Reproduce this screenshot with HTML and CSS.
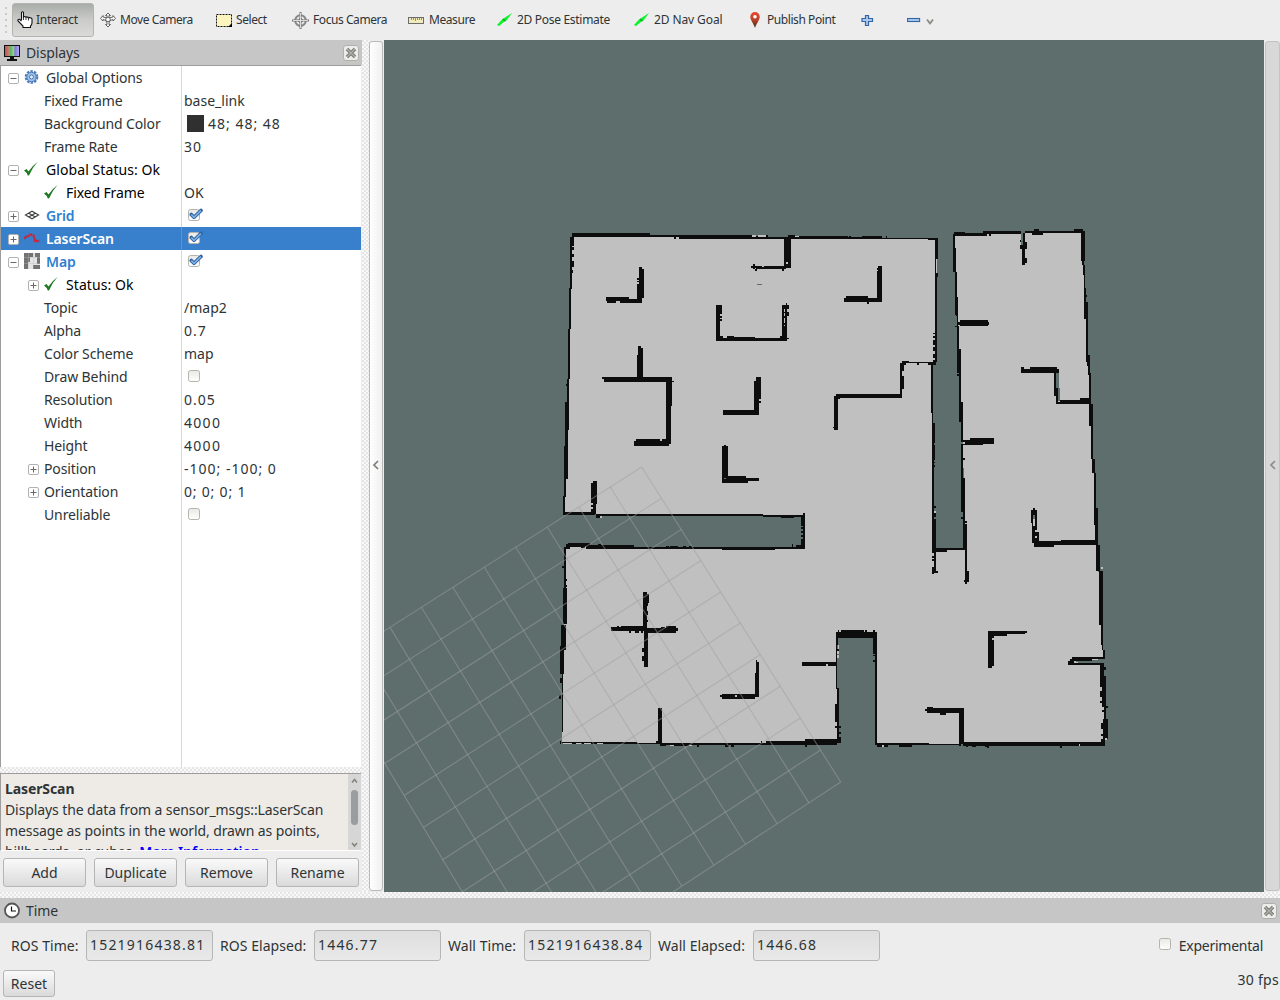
FILE: index.html
```html
<!DOCTYPE html>
<html lang="en">
<head>
<meta charset="utf-8">
<title>RViz</title>
<link rel="stylesheet" href="styles.css">
</head>
<body>
<svg class="defs" width="0" height="0">
  <defs>
    <linearGradient id="gbox" x1="0" y1="0" x2="0" y2="1"><stop offset="0" stop-color="#e8e8e6"/><stop offset="1" stop-color="#fff"/></linearGradient>
    <linearGradient id="gpin" x1="0" y1="0" x2="0" y2="1"><stop offset="0" stop-color="#f0452e"/><stop offset=".5" stop-color="#b8432b"/><stop offset="1" stop-color="#3e2a10"/></linearGradient>
    <symbol id="check" viewBox="0 0 14 14"><path d="M0 8.500L2.500 7L4.500 9.500Q8 4 13.500 0Q8 6 5 13.500H3.800Q2.500 10 0 8.500z" fill="#1d7a22"/></symbol>
    <symbol id="box" viewBox="0 0 16 14"><rect x="1.500" y="1.500" width="11" height="11" rx="2" fill="url(#gbox)" stroke="#b4b4ac"/></symbol>
    <symbol id="boxon" viewBox="0 0 16 14"><rect x="1.500" y="1.500" width="11" height="11" rx="2" fill="url(#gbox)" stroke="#b4b4ac"/><path d="M4.300 6.500L7 9.300L14 2.500" fill="none" stroke="#2f62a3" stroke-width="3.600" stroke-linejoin="round" stroke-linecap="round"/><path d="M4.300 6.700L7 9.300L13.900 2.600" fill="none" stroke="#80b0e2" stroke-width="1.700"/></symbol>
    <symbol id="plus" viewBox="0 0 11 11"><rect x=".5" y=".5" width="10" height="10" rx="1.500" fill="#fff" stroke="#b2b2b2"/><path d="M2.500 5.500h6M5.500 2.500v6" stroke="#686868"/></symbol>
    <symbol id="minus" viewBox="0 0 11 11"><rect x=".5" y=".5" width="10" height="10" rx="1.500" fill="#fff" stroke="#b2b2b2"/><path d="M2.500 5.500h6" stroke="#686868"/></symbol>
    <symbol id="arrow" viewBox="0 0 16 14"><path d="M0 12L5 6.500L6.500 5.500L15 0L9.500 7.500L7.500 8.500L2 13z" fill="#0cf329"/><path d="M5.500 6.500L6.500 5.500L9 8L7.800 8.500z" fill="#169a28"/></symbol>
    <symbol id="close" viewBox="0 0 16 16"><rect x=".5" y=".5" width="15" height="15" rx="2.500" fill="#ececea" stroke="#b0b0ae"/><path d="M4 4l8 8M12 4l-8 8" stroke="#777971" stroke-width="3.400"/><path d="M4 4l8 8M12 4l-8 8" stroke="#b0b1ac" stroke-width="1.300"/></symbol>
  </defs>
</svg>

<div class="toolbar">
  <div class="grip"></div>
  <div class="tool active"><svg width="17" height="17" viewBox="0 0 17 17"><path d="M4.500 9V1.500q1-1.500 2 0V6q1-1 2.300.2q1-.8 2.200.3q1.200-.7 2 .5q1.500-.5 2 1V12q-.2 2-1.500 3v1.500H6V15L1 10Q.5 8 2.500 8.300L4.500 10" fill="#fff" stroke="#111" stroke-width="1.100"/><path d="M6.500 6v3M9 6.500V9M11.500 7v2.500" stroke="#111" stroke-width=".8"/></svg><span>Interact</span></div>
  <div class="tool"><svg width="16" height="16" viewBox="0 0 16 16" fill="#f8f8f8" stroke="#555" stroke-width=".9"><path d="M8 1l2.500 2.500H9V6L13 5V3.500L15.500 6.500L13 9V7.500L10 8.500L9 11v1.500h1.500L8 15l-2.500-2.500H7V11L6 8.500L3 7.500V9L.5 6.500L3 3.500V5l4 1V3.500H5.500z"/><circle cx="8" cy="7.500" r="2.300"/></svg><span>Move Camera</span></div>
  <div class="tool"><svg width="16" height="15" viewBox="0 0 16 15"><rect x=".5" y="1.500" width="15" height="12" fill="#fcf5bd" stroke="#111" stroke-dasharray="2 1"/><path d="M16 10v4h-4z"/></svg><span>Select</span></div>
  <div class="tool"><svg width="17" height="17" viewBox="0 0 17 17" fill="none"><circle cx="8.500" cy="8.500" r="5.300" stroke="#888" stroke-width="2"/><circle cx="8.500" cy="8.500" r="2" stroke="#666"/><path d="M8.500 0v17M0 8.500h17" stroke="#777" stroke-width="2"/><path d="M8.500 1v15M1 8.500h15" stroke="#f4f4f4" stroke-width=".8"/></svg><span>Focus Camera</span></div>
  <div class="tool measure"><svg width="16" height="7" viewBox="0 0 16 7"><rect x=".5" y=".5" width="15" height="6" fill="#f0ebba" stroke="#6d6d6d"/><path d="M3.500 1v2M5.500 1v2M7.500 1v3M9.500 1v2M11.500 1v2M13.500 1v2" stroke="#777" stroke-width=".8"/></svg><span>Measure</span></div>
  <div class="tool pose"><svg width="16" height="14"><use href="#arrow"/></svg><span>2D Pose Estimate</span></div>
  <div class="tool nav"><svg width="16" height="14"><use href="#arrow"/></svg><span>2D Nav Goal</span></div>
  <div class="tool point"><svg width="10" height="16" viewBox="0 0 10 16"><path d="M5 0a4.700 4.700 0 0 1 4.700 5C9.700 8 6.500 11.500 5 16C3.500 11.500.3 8 .3 5A4.700 4.700 0 0 1 5 0z" fill="url(#gpin)"/><circle cx="5" cy="4.700" r="1.800" fill="#fff"/></svg><span>Publish Point</span></div>
  <div class="tool"><svg width="13" height="13" viewBox="0 0 13 13"><path d="M4.500 1.500h3v3h4v3h-4v4h-3v-4h-3.500v-3h3.500z" fill="#a9c9ee" stroke="#3465a4" stroke-width="1.200"/></svg></div>
  <div class="tool"><svg width="28" height="12" viewBox="0 0 28 12"><rect x=".6" y="4.500" width="12" height="3" fill="#a9c9ee" stroke="#3465a4" stroke-width="1.100"/><path d="M20 5.500l3 4l3-4" fill="none" stroke="#8b8b85" stroke-width="1.800"/></svg></div>
</div>

<div class="middle">
  <div class="dock">
    <div class="title"><svg class="monitor" width="17" height="17" viewBox="0 0 17 17"><defs><linearGradient id="scr"><stop offset="0" stop-color="#c0504c"/><stop offset=".35" stop-color="#c08a84"/><stop offset=".36" stop-color="#5bb054"/><stop offset=".66" stop-color="#9cd796"/><stop offset=".67" stop-color="#7a75d8"/><stop offset="1" stop-color="#b4b0f2"/></linearGradient></defs><rect x=".5" y=".5" width="15" height="11" fill="url(#scr)" stroke="#111"/><path d="M6 12h4v2h3v2H3v-2h3z" fill="#111"/></svg><span>Displays</span><svg class="close" width="16" height="16"><use href="#close"/></svg></div>
    <div class="tree">
      <div class="row"><div class="name l0"><svg class="tog"><use href="#minus"/></svg><svg class="ico up" viewBox="0 0 16 16"><circle cx="7.500" cy="8" r="5.800" fill="none" stroke="#4a7ab8" stroke-width="2" stroke-dasharray="2.500 1.140"/><circle cx="7.500" cy="8" r="4.700" fill="#9dbfe6" stroke="#4a7ab8"/><circle cx="7.500" cy="8" r="2" fill="#e8f0fa" stroke="#4a7ab8"/></svg>Global Options</div><div class="val"></div></div>
      <div class="row"><div class="name leaf">Fixed Frame</div><div class="val">base_link</div></div>
      <div class="row"><div class="name leaf">Background Color</div><div class="val num"><i class="swatch"></i>48; 48; 48</div></div>
      <div class="row"><div class="name leaf">Frame Rate</div><div class="val num">30</div></div>
      <div class="row black wide"><div class="name l0"><svg class="tog"><use href="#minus"/></svg><svg class="chk"><use href="#check"/></svg>Global Status: Ok</div><div class="val"></div></div>
      <div class="row black"><div class="name leaf"><svg class="chk"><use href="#check"/></svg>Fixed Frame</div><div class="val ok">OK</div></div>
      <div class="row disp"><div class="name l0"><svg class="tog"><use href="#plus"/></svg><svg class="ico up" viewBox="0 0 16 16" fill="none" stroke="#444" stroke-width="1.200"><path d="M1.500 8L8 4.300l6.500 3.700L8 11.700zM4.700 6.200l6.600 3.700M11.300 6.200l-6.600 3.700"/></svg>Grid</div><div class="val"><svg class="cb"><use href="#boxon"/></svg></div></div>
      <div class="row disp sel"><div class="name l0"><svg class="tog"><use href="#plus"/></svg><svg class="ico" viewBox="0 0 16 16"><path d="M.5 9L2 6.500L4.500 6L6 4.500L9.500 5.500l1.500 5.500h4.500" fill="none" stroke="#cf2438" stroke-width="2.300" stroke-dasharray="3 .5"/></svg>LaserScan</div><div class="val"><svg class="cb"><use href="#boxon"/></svg></div></div>
      <div class="row disp"><div class="name l0"><svg class="tog"><use href="#minus"/></svg><svg class="ico mapico" viewBox="0 0 16 16"><path d="M0 0h16v16H0z" fill="#e5e5e5"/><path d="M0 0h9v4H6v5H4v7H0zM11 0h5v4h-5zM13 4h3v7h-3zM9 12h7v4H9z" fill="#737373"/><path d="M4.500 0v16M9.500 0v16M0 4.500h16M0 10.500h16" stroke="#bbb" stroke-width=".4"/></svg>Map</div><div class="val"><svg class="cb"><use href="#boxon"/></svg></div></div>
      <div class="row black wide"><div class="name l1"><svg class="tog"><use href="#plus"/></svg><svg class="chk"><use href="#check"/></svg>Status: Ok</div><div class="val"></div></div>
      <div class="row"><div class="name leaf">Topic</div><div class="val">/map2</div></div>
      <div class="row"><div class="name leaf">Alpha</div><div class="val num">0.7</div></div>
      <div class="row"><div class="name leaf">Color Scheme</div><div class="val">map</div></div>
      <div class="row"><div class="name leaf">Draw Behind</div><div class="val"><svg class="cb"><use href="#box"/></svg></div></div>
      <div class="row"><div class="name leaf">Resolution</div><div class="val num">0.05</div></div>
      <div class="row"><div class="name leaf">Width</div><div class="val num big">4000</div></div>
      <div class="row"><div class="name leaf">Height</div><div class="val num big">4000</div></div>
      <div class="row"><div class="name l1"><svg class="tog"><use href="#plus"/></svg>Position</div><div class="val num">-100; -100; 0</div></div>
      <div class="row"><div class="name l1"><svg class="tog"><use href="#plus"/></svg>Orientation</div><div class="val num slim">0; 0; 0; 1</div></div>
      <div class="row"><div class="name leaf">Unreliable</div><div class="val"><svg class="cb"><use href="#box"/></svg></div></div>
      <div class="row fill"><div class="name"></div><div class="val"></div></div>
    </div>
    <div class="hsplit dots"></div>
    <div class="help">
      <div class="helptext"><b>LaserScan</b><br>Displays the data from a sensor_msgs::LaserScan<br>message as points in the world, drawn as points,<br>billboards, or cubes. <a>More Information.</a></div>
      <div class="sbar"><svg width="13" height="76" viewBox="0 0 13 76"><path d="M4 8.500l2.500-3l2.500 3M4 69l2.500 3l2.500-3" fill="none" stroke="#85857f" stroke-width="1.600"/><rect x="3" y="16" width="7" height="35" rx="3.500" fill="#9a9c9d"/></svg></div>
    </div>
    <div class="buttons"><div class="btn">Add</div><div class="btn">Duplicate</div><div class="btn">Remove</div><div class="btn">Rename</div></div>
  </div>
  <div class="vsplit dots"></div>
  <div class="handle left"><svg width="8" height="10" viewBox="0 0 8 10"><path d="M6 1L2 5l4 4" fill="none" stroke="#7d7d78" stroke-width="1.700"/></svg></div>
  <svg class="view" width="880" height="852" viewBox="384 40 880 852">
    <rect x="384" y="40" width="880" height="852" fill="#5e6e6c"/>
    <g shape-rendering="crispEdges">
      <path fill="#c0c0c0" d="M572 236L788 237L937 239L936 363L932 363L934 549L965 549L963 440L958 330L954 235L1083 232L1086 300L1090 400L1097 543L1103 657V659L1070 662L1103 664L1105 744H876V633H837V743H562L564 640L566 547H804V515L565 514L568 370z"/>
      <g fill="#0d0d0d">
        <path transform="translate(550 220) scale(.33333)" d="M66 39h234v9h-234zM66 45h540v6h-540zM372 51h6v6h-6zM387 51h423v6h-423zM606 49h48v3h-48zM648 45h6v6h-6zM714 45h21v6h-21zM748 48h62v6h-62zM60 51h6v155h-6zM66 51h6v27h-6zM66 82h6v8h-6zM66 102h6v10h-6zM66 122h6v18h-6zM64 150h4v8h-4zM57 204h6v123h-6zM54 327h6v150h-6zM48 492h6v6h-6zM51 477h6v70h-6zM45 546h12v84h-12zM45 630h9v50h-9zM42 678h12v99h-12zM42 777h6v55h-6zM39 828h6v54h-6zM39 876h96v9h-96z
        M267 141h9v10h-9zM267 147h15v87h-15zM261 174h6v6h-6zM261 183h6v4h-6zM261 193h6v44h-6zM261 234h15v14h-15zM168 231h69v12h-69zM171 237h27v11h-27zM198 237h78v6h-78zM210 240h60v8h-60z
        M702 51h21v75h-21zM702 126h6v18h-6zM714 126h9v18h-9zM708 132h6v12h-6zM642 138h66v9h-66zM603 138h18v6h-18zM609 132h6v15h-6zM615 147h6v5h-6zM618 142h24v5h-24zM618 138h17v4h-17zM696 144h6v9h-6z
        M498 255h12v108h-12zM510 255h6v27h-6zM510 289h6v4h-6zM510 297h6v5h-6zM498 354h213v9h-213zM498 348h21v9h-21zM531 348h21v9h-21zM552 351h63v4h-63zM690 348h15v9h-15zM696 255h6v100h-6zM706 255h5v100h-5zM702 255h6v12h-6zM702 276h6v3h-6zM702 288h6v5h-6zM702 309h6v6h-6zM702 318h3v30h-3zM711 255h6v12h-6zM711 276h6v12h-6zM708 249h3v6h-3zM711 354h6v3h-6z
        M264 378h9v27h-9zM267 384h12v90h-12zM261 405h9v69h-9zM156 471h210v6h-210zM162 477h204v9h-204zM348 477h18v81h-18zM348 558h15v114h-15zM366 483h6v3h-6zM252 663h105v15h-105zM258 657h72v9h-72zM336 657h26v15h-26z
        M618 471h15v66h-15zM612 483h15v99h-15zM627 543h6v6h-6zM519 570h108v14h-108zM516 678h18v96h-18zM522 675h6v3h-6zM528 768h60v21h-60zM516 768h6v21h-6zM516 778h78v11h-78zM588 774h39v9h-39z
        M129 783h12v69h-12zM123 789h18v60h-18zM129 849h9v33h-9zM123 855h5v5h-5zM123 866h9v10h-9zM138 882h501v6h-501zM639 885h126v5h-126zM693 888h39v6h-39zM138 885h12v8h-12z"/>
        <path transform="translate(800 220) scale(.33333)" d="M0 48h30v5H0zM33 48h112v5H33zM147 48h6v5h-6zM0 51h246v6H0zM186 48h60v6h-60zM258 48h3v6h-3zM246 54h168v3h-168zM384 56h24v4h-24zM405 54h8v63h-8zM405 117h3v52h-3zM407 159h7v12h-7zM405 169h6v258h-6zM399 339h6v3h-6zM399 348h6v6h-6zM399 360h6v15h-6zM399 381h6v12h-6zM399 402h6v12h-6zM399 420h9v9h-9z
        M234 138h12v107h-12zM231 144h6v6h-6zM231 153h15v92h-15zM132 234h114v11h-114zM138 228h66v9h-66zM201 245h6v6h-6z
        M306 423h21v6h-21zM300 429h12v24h-12zM300 429h6v105h-6zM306 468h6v39h-6zM312 426h93v3h-93zM312 429h6v6h-6zM351 429h6v6h-6zM384 426h24v8h-24zM108 522h198v11h-198zM102 528h12v101h-12zM99 621h3v4h-3zM114 533h6v4h-6zM393 429h6v150h-6zM396 579h3v30h-3zM397 609h8v59h-8zM397 675h8v45h-8zM396 668h6v202h-6zM402 726h4v4h-4zM402 736h4v4h-4zM402 858h6v6h-6zM396 869h6v131h-6zM402 880h6v11h-6zM400 897h8v103h-8zM402 990h6v66h-6zM396 1008h6v6h-6zM396 1017h6v5h-6zM396 1041h6v21h-6zM402 1053h12v6h-12zM408 984h90v6h-90zM408 990h33v6h-33z
        M459 42h6v114h-6zM462 36h33v12h-33zM465 84h3v72h-3zM465 156h5v130h-5zM467 207h4v80h-4zM470 230h4v90h-4zM465 318h6v3h-6zM471 318h6v140h-6zM477 387h6v160h-6zM471 462h6v6h-6zM477 546h12v60h-12zM483 606h6v60h-6zM483 672h6v204h-6zM489 714h6v6h-6zM489 774h6v216h-6zM483 891h6v6h-6zM495 903h6v5h-6zM495 912h6v150h-6zM495 1053h12v33h-12zM492 1080h9v6h-9zM495 1086h6v6h-6z
        M474 306h93v10h-93zM480 300h84v18h-84zM489 660h93v6h-93zM495 660h87v12h-87zM510 654h72v18h-72zM489 671h60v4h-60z
        M465 39h95v8h-95zM549 33h114v9h-114zM567 42h6v6h-6zM675 33h180v6h-180zM702 27h15v6h-15zM696 39h33v6h-33zM822 27h27v6h-27zM669 39h6v48h-6zM660 75h21v12h-21zM660 60h3v5h-3zM672 66h9v21h-9zM666 87h9v48h-9zM675 114h6v15h-6z
        M843 33h12v90h-12zM846 123h6v12h-6zM849 135h6v30h-6zM852 165h4v42h-4zM852 205h6v92h-6zM858 225h3v6h-3zM858 246h6v180h-6zM861 405h9v33h-9zM864 438h6v28h-6zM867 460h5v46h-5zM867 501h6v51h-6zM867 552h12v66h-12zM873 618h6v100h-6zM876 717h9v42h-9zM882 759h6v156h-6zM885 864h9v111h-9zM888 975h12v78h-12zM897 1053h12v57h-12z
        M663 447h114v12h-114zM690 441h81v10h-81zM663 441h9v9h-9zM762 456h6v72h-6zM768 480h6v72h-6zM780 540h92v12h-92zM768 546h15v6h-15zM840 534h33v9h-33zM693 870h6v40h-6zM699 864h6v21h-6zM705 870h6v60h-6zM696 909h3v60h-3zM699 918h6v50h-6zM705 936h12v12h-12zM711 945h6v20h-6zM705 955h8v10h-8zM702 963h189v11h-189zM783 960h110v6h-110zM702 974h60v6h-60z"/>
        <path transform="translate(550 500) scale(.33333)" d="M759 39h6v105h-6zM753 45h6v32h-6zM753 82h6v6h-6zM753 94h6v5h-6zM753 106h6v6h-6zM753 118h6v25h-6zM48 132h48v9h-48zM54 129h65v9h-65zM42 141h18v6h-18zM94 138h12v6h-12zM108 135h144v11h-144zM144 132h9v4h-9zM252 140h512v6h-512zM516 144h159v6h-159zM348 137h8v4h-8zM360 138h24v4h-24zM399 138h9v4h-9zM417 137h9v4h-9zM726 132h3v9h-3zM738 135h27v5h-27zM42 147h6v120h-6zM36 198h6v6h-6zM48 237h3v5h-3zM48 255h3v5h-3zM39 264h12v108h-12zM33 375h15v75h-15zM30 438h12v84h-12zM30 534h9v16h-9zM36 522h4v28h-4zM36 550h3v145h-3zM27 585h6v12h-6zM30 722h4v9h-4z
        M36 726h225v4h-225zM66 730h12v3h-12zM95 730h7v3h-7zM123 730h18v3h-18zM160 729h170v3h-170zM324 624h12v105h-12zM318 723h15v8h-15zM330 729h18v8h-18zM348 729h416v5h-416zM363 732h54v6h-54zM441 735h6v5h-6zM525 735h12v5h-12zM543 735h8v5h-8zM633 723h3v6h-3zM648 723h120v10h-120zM765 717h96v18h-96zM861 711h12v18h-12zM765 735h6v5h-6z
        M279 276h12v115h-12zM291 282h6v27h-6zM288 309h6v10h-6zM288 333h6v12h-6zM288 360h6v6h-6zM282 390h12v110h-12zM276 444h6v12h-6zM276 468h6v15h-6zM183 381h30v11h-30zM201 378h6v4h-6zM213 378h78v14h-78zM291 384h87v14h-87zM348 378h30v9h-30zM378 384h6v9h-6zM333 381h11v4h-11zM237 392h6v6h-6zM255 392h12v6h-12zM273 392h6v6h-6z
        M618 480h3v6h-3zM618 486h9v105h-9zM615 519h12v72h-12zM510 585h45v6h-45zM516 582h39v15h-39zM561 582h66v9h-66zM555 591h60v6h-60zM555 582h6v3h-6zM561 588h54v9h-54zM756 486h105v6h-105zM756 490h72v7h-72zM834 490h25v7h-25zM858 396h6v40h-6zM858 436h3v50h-3zM858 486h4v80h-4zM861 448h6v4h-6zM861 564h6v100h-6zM855 612h9v54h-9zM862 660h5v60h-5zM855 678h18v5h-18zM861 696h12v6h-12z"/>
        <path transform="translate(820 540) scale(.33333)" d="M48 276h123v18H48zM54 270h3v6h-3zM63 270h70v6H63zM135 270h6v6h-6zM159 270h6v6h-6zM48 294h6v20h-6zM165 294h6v318h-6zM159 294h9v48h-9zM159 345h6v4h-6zM159 360h6v6h-6zM165 609h162v5H165zM171 614h33v6h-33zM237 614h39v6h-39zM327 612h95v3h-95zM417 504h15v108h-15zM321 504h111v14H321zM315 507h6v6h-6zM321 501h18v6h-18zM360 518h18v6h-18zM417 612h6v6h-6zM429 606h426v12H429zM438 618h6v3h-6zM456 618h12v3h-12zM495 618h12v3h-12zM501 618h6v6h-6zM720 618h6v6h-6z
        M840 375h12v66h-12zM846 381h12v9h-12zM852 408h6v130h-6zM846 441h6v60h-6zM840 453h6v18h-6zM840 483h6v5h-6zM846 510h6v5h-6zM858 498h6v6h-6zM850 537h13v60h-13zM843 549h7v18h-7zM843 582h9v6h-9zM843 597h12v21h-12zM744 363h18v12h-18zM750 357h66v6h-66zM757 351h98v6h-98zM762 369h90v6h-90zM849 330h6v27h-6zM837 92h9v163h-9zM843 135h6v120h-6zM843 255h5v60h-5zM846 315h3v15h-3z
        M504 273h117v6H504zM504 279h57v9h-57zM504 279h18v14h-18zM504 290h12v94h-12zM515 300h7v78h-7zM561 279h54v3h-54z"/>
      </g>
      <path fill="#c0c0c0" d="M752 235h4v2h-4zM758 235h8v2h-8zM795 236h4v1h-4zM600 516h2v2h-2zM934 511h2v2h-2zM1033 518h2v7h-2zM838 645h1v4h-1zM837 651h2v3h-2zM837 655h2v3h-2zM882 745h2v2h-2zM1079 744h1v2h-1zM1105 738h2v2h-2zM1101 567h2v2h-2zM670 745h4v1h-4zM689 745h3v1h-3zM563 743h9v1h-9zM576 743h5v1h-5zM584 743h7v1h-7zM597 743h6v1h-6z"/>
      <path fill="#5e6e6c" d="M757 284h5v1h-5zM1021 231h2v14h-2zM1056 373h3v15h-3zM1058 388h2v13h-2zM1033 515h2v4h-2zM724 478h2v1h-2z"/>
    </g>
    <g stroke="#a0a0a4" stroke-opacity=".5" stroke-width="1.150" fill="none">
      <path d="M641.700 467L840.700 782M610.200 487L808.900 802.900M578.800 507.100L777.100 823.600M547.300 527.200L745.500 844.300M515.800 547.200L713.700 865M484.300 567.200L681.700 886M452.900 587.300L649.900 907M421.400 607.300L618 928M390 627.400L586.300 949M358.500 647.500L554.500 970M327 667.500L522 991"/>
      <path d="M641.700 467L327 667.500M661.500 498.300L346.600 699.500M681.600 529.300L366 731.500M701 560.500L384.500 763.500M720.700 592L404 795.500M740.300 623L423.300 827.500M760 654.700L442.300 860M780.300 686.200L462 892M800.300 718L482 925M820.600 750L502 958M840.700 782L522 991"/>
    </g>
  </svg>
  <div class="handle right"><svg width="8" height="10" viewBox="0 0 8 10"><path d="M6 1L2 5l4 4" fill="none" stroke="#8d8d88" stroke-width="1.700"/></svg></div>
</div>

<div class="bsplit dots"></div>
<div class="title time"><svg width="17" height="17" viewBox="0 0 17 17"><circle cx="8" cy="8.500" r="7" fill="#fff" stroke="#555" stroke-width="1.800"/><path d="M7.500 4.500v4.500h4.500" fill="none" stroke="#111" stroke-width="1.200"/></svg><span>Time</span><svg class="close" width="16" height="16"><use href="#close"/></svg></div>
<div class="times">
  <label>ROS Time:</label><div class="field">1521916438.81</div>
  <label>ROS Elapsed:</label><div class="field">1446.77</div>
  <label>Wall Time:</label><div class="field">1521916438.84</div>
  <label>Wall Elapsed:</label><div class="field">1446.68</div>
  <div class="exp"><svg class="cb"><use href="#box"/></svg><span>Experimental</span></div>
</div>
<div class="status"><div class="btn reset">Reset</div><div class="fps">30 fps</div></div>
</body>
</html>
```
FILE: styles.css
```css
* { box-sizing: border-box; }
html, body { margin: 0; }
body { width: 1280px; height: 1000px; overflow: hidden; background: #ededed; color: #2e3436; font: 14px/20px "Noto Sans", "Open Sans", sans-serif; display: flex; flex-direction: column; white-space: nowrap; }
svg { display: block; flex: none; }
.defs { position: absolute; }

/* Toolbar */
.toolbar { height: 40px; flex: none; display: grid; grid-template-columns: 12px 88px 116px 76px 116px 89px 137px 116px 111px 46px 40px; font-size: 12px; letter-spacing: -.43px; align-items: center; }
.grip { width: 2px; height: 26px; margin-left: 5px; background: repeating-linear-gradient(#c9c9c9 0 2px, #ededed 2px 6px); }
.tool { display: flex; align-items: center; gap: 4px; height: 34px; }
.tool.active { width: 82px; padding-left: 4px; margin-top: -1px; gap: 2px; letter-spacing: -.3px; border: 1px solid #b3b3af; border-radius: 3px; background: linear-gradient(#a9aca8, #cbccca 50%, #dadad9); }
.measure { gap: 5px; }
.pose { letter-spacing: -.3px; }
.nav { letter-spacing: -.1px; }
.point { gap: 7px; }

/* Displays dock */
.middle { height: 852px; flex: none; display: flex; }
.dock { width: 362px; flex: none; display: flex; flex-direction: column; }
.title { height: 25px; flex: none; background: #c6c6c6; display: flex; align-items: center; gap: 5px; padding: 0 3px 0 4px; }
.title span { flex: 1; letter-spacing: -.1px; padding-top: 1px; }
.monitor { margin-top: 1px; }
.tree { height: 702px; border: solid #9d9d9d; border-width: 1px 0 0 1px; background: #fff; flex: none; display: flex; flex-direction: column; width: 361px; }
.row { display: flex; height: 23px; flex: none; line-height: 23px; }
.row.fill { flex: 1; height: auto; }
.name { width: 181px; border-right: 1px solid #d8d8d8; display: flex; align-items: center; padding-bottom: 1px; letter-spacing: -.12px; }
.wide .name { letter-spacing: .08px; }
.val { flex: 1; padding: 0 0 1px 2px; display: flex; align-items: center; }
.num { letter-spacing: 1px; }
.big { letter-spacing: 1.3px; }
.slim { letter-spacing: .8px; }
.l0 { padding-left: 7px; }
.l1 { padding-left: 27px; }
.leaf { padding-left: 43px; }
.tog { width: 11px; height: 11px; margin: 2px 5px 0 0; }
.ico { width: 16px; height: 16px; margin-right: 6px; }
.ico.up { margin-top: -1px; }
.chk { width: 14px; height: 14px; margin: 0 8px 0 0; }
.cb { width: 16px; height: 14px; margin: 0 0 0 3px; }
.swatch { width: 17px; height: 17px; background: #303030; margin: 1px 4px 0 3px; }
.black .name { color: #000; }
.disp .name { color: #2e80d0; font-weight: 600; }
.row.sel { background: #3880cb; }
.sel .name { color: #fff; border-color: #5f94ca; }
.dots { background: conic-gradient(#f8f8f8 25%, #e6e6e6 0 50%, #f8f8f8 0 75%, #e6e6e6 0) 0 0 / 4px 4px; }
.hsplit { height: 6px; }
.help { width: 361px; height: 78px; border: solid #9d9d9d; border-width: 1px 0 0 1px; border-bottom: 1px solid #fff; background: #eeebe7; display: flex; overflow: hidden; }
.helptext { flex: 1; padding: 4px 0 0 4px; line-height: 21px; overflow: hidden; letter-spacing: -.1px; }
.helptext a { color: #00f; font-weight: 600; }
.sbar { width: 13px; background: #d6d6d6; }
.buttons { display: grid; grid-template-columns: repeat(4, 83px); gap: 8px; padding: 7px 0 0 3px; }
.btn { height: 29px; border: 1px solid #b5b5b3; border-radius: 3px; background: linear-gradient(#fafafa, #dadada); display: flex; align-items: center; justify-content: center; }
.vsplit { width: 7px; flex: none; }
.handle { width: 15px; flex: none; border: 1px solid #b8bab8; border-radius: 3px; background: linear-gradient(90deg, #fff, #f0f0f0); display: flex; align-items: center; justify-content: center; margin-top: 1px; height: 850px; padding-bottom: 2px; }
.handle.left { width: 14px; margin-right: 1px; }
.handle.right { margin-left: 1px; background: #d8d8d8; border-color: #c3c3c3; }

/* Time panel */
.bsplit { height: 6px; flex: none; }
.title.time { padding-right: 3px; }
.times { height: 44px; padding-left: 11px; display: grid; grid-template-columns: 75px 134px 94px 134px 76px 134px 95px 134px 1fr; align-items: center; flex: none; }
.times label { padding-top: 1px; letter-spacing: .05px; }
.field { width: 127px; height: 31px; border: 1px solid #b5b7b5; border-radius: 3px; background: linear-gradient(#dedede, #e9e9e9); padding: 4px 0 0 3px; letter-spacing: 1.2px; }
.exp { display: flex; justify-content: flex-end; align-items: center; gap: 5px; padding: 1px 17px 0 0; letter-spacing: -.25px; }
.exp .cb { margin-top: -3px; }
.status { display: flex; justify-content: space-between; padding: 3px 1px 0 3px; }
.reset { width: 52px; height: 27px; }
.fps { letter-spacing: .3px; }
```
